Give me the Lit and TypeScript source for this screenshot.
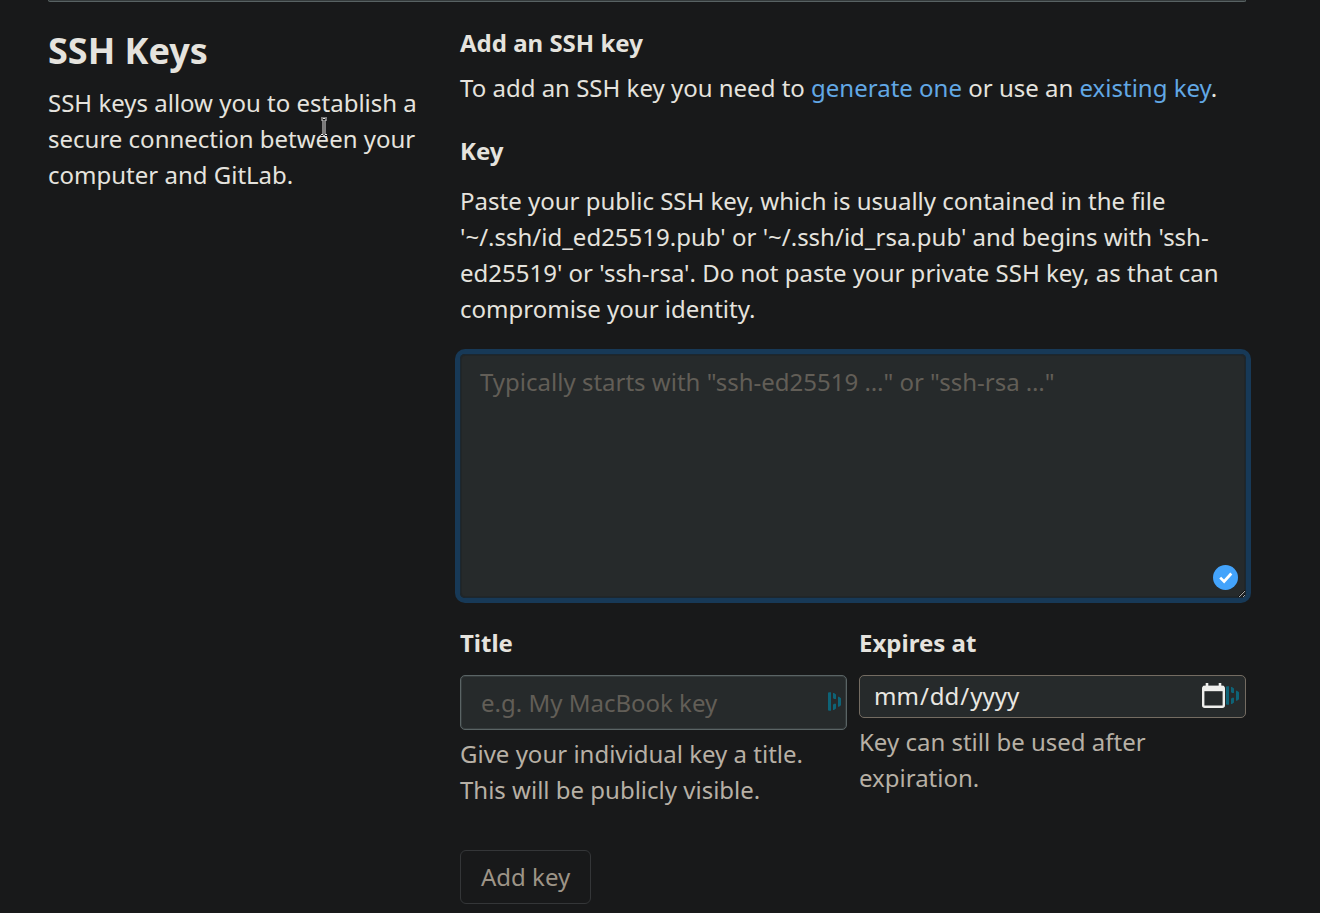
import { LitElement, html, css } from "lit";
import { customElement } from "lit/decorators.js";

@customElement("app-root")
export class AppRoot extends LitElement {
  static styles = css`
    :host {
      display: block;
      min-height: 100vh;
      box-sizing: border-box;
      background: #18191a;
      color: #e5e3de;
      font: 24px/36px "Noto Sans", sans-serif;
      color-scheme: dark;
    }
    * { box-sizing: border-box; }
    .page { padding: 0 74px 9px 48px; }
    .panel-end {
      height: 2px;
      border: 1px solid #586263;
      border-top: 0;
      border-radius: 0 0 4px 4px;
      background: #343a3b;
    }
    .section {
      display: grid;
      grid-template-columns: 1fr 2fr;
      column-gap: 19px;
      padding-top: 23px;
    }
    .intro { position: relative; }
    h1, h2, p { margin: 0; }
    h1 { font-size: 36px; line-height: 48px; margin-top: 2px; font-weight: 700; }
    .intro p { margin-top: 10px; }
    h2, label { display: block; font-size: 24px; line-height: 36px; font-weight: 700; }
    .lead { margin-top: 9px; }
    a { color: #62a8e5; text-decoration: none; }
    .key-label { margin-top: 27px; }
    .key-help { margin-top: 14px; }
    input, textarea, button { font: inherit; margin: 0; }
    .field { position: relative; display: flex; }
    .key-field { margin-top: 27px; }
    textarea {
      display: block;
      width: 100%;
      height: 244px;
      padding: 10px 20px;
      border: 0;
      border-radius: 5px;
      outline: 0;
      background: #262a2b;
      color: #e5e3de;
      box-shadow: inset 0 0 0 1px #1b2730, inset 0 0 0 2px #222627, 0 0 0 5px #173957;
      resize: vertical;
    }
    ::placeholder { color: #625e57; opacity: 1; }
    .check { position: absolute; right: 8px; bottom: 8px; width: 25px; height: 25px; }
    .row {
      display: grid;
      grid-template-columns: 1fr 1fr;
      column-gap: 12px;
      margin-top: 27px;
    }
    .row .field { margin-top: 14px; }
    input {
      width: 100%;
      min-width: 0;
      border-radius: 5px;
      background: #262a2b;
      color: #e9e7e2;
    }
    .title { height: 55px; padding: 0 20px; border: 1px solid #5a6465; box-shadow: inset 0 0 0 1px #343a3b; }
    .date { height: 43px; padding: 0 13px 2px; border: 1px solid #746c62; }
    .date::-webkit-calendar-picker-indicator { opacity: 0; }
    .mark { position: absolute; right: 5px; top: 17px; width: 14px; height: 19px; }
    .date-mark { top: 11px; right: 6px; }
    .calendar { position: absolute; right: 21px; top: 8px; width: 23px; height: 25px; pointer-events: none; }
    .hint { color: #b7b0a5; margin-top: 6px; }
    button {
      display: block;
      margin-top: 42px;
      height: 54px;
      padding: 0 20px;
      border: 1px solid #343638;
      border-radius: 6px;
      background: transparent;
      color: #9d9487;
    }
    .pointer { position: absolute; left: 272px; top: 92px; width: 8px; height: 20px; pointer-events: none; }
  `;

  private mark(cls: string) {
    return html`<svg class="mark ${cls}" viewBox="0 0 14 19" aria-hidden="true" fill="#0e6377">
      <path d="M0 .8 1 .3h2v18.400H1l-1-.5zM5 1h1l2 1.500V7H6L5 6zM5 12.800l1-1h2v4.700L6 18H5zM10 4.800h1l2 1.500v6.900l-2 1.500h-1z"/>
    </svg>`;
  }

  render() {
    return html`
      <main class="page">
        <div class="panel-end"></div>
        <section class="section">
          <div class="intro">
            <h1>SSH Keys</h1>
            <p>SSH keys allow you to establish a secure connection between your computer and GitLab.</p>
            <svg class="pointer" viewBox="0 0 8 20" aria-hidden="true" fill="none">
              <path d="M1 2h2l1 1 1-1h2M4 3v15M1 18.500h2l1-1 1 1h2" stroke="#e4e4e4" stroke-width="3"/>
              <path d="M1 2h2l1 1 1-1h2M4 3v15M1 18.500h2l1-1 1 1h2" stroke="#111" stroke-width="1"/>
            </svg>
          </div>
          <form>
            <h2>Add an SSH key</h2>
            <p class="lead">To add an SSH key you need to <a href="#generate">generate one</a> or use an <a href="#existing">existing key</a>.</p>
            <label class="key-label" for="key">Key</label>
            <p class="key-help" id="key-help">Paste your public SSH key, which is usually contained in the file '~/.ssh/id_ed25519.pub' or '~/.ssh/id_rsa.pub' and begins with 'ssh-ed25519' or 'ssh-rsa'. Do not paste your private SSH key, as that can compromise your identity.</p>
            <div class="field key-field">
              <textarea id="key" aria-describedby="key-help" placeholder='Typically starts with "ssh-ed25519 …" or "ssh-rsa …"'></textarea>
              <svg class="check" viewBox="0 0 25 25" aria-hidden="true">
                <circle cx="12.500" cy="12.500" r="12.500" fill="#43a3fb"/>
                <path d="m7.200 12.600 3.900 3.900 7.200-8" fill="none" stroke="#fff" stroke-width="2.700"/>
              </svg>
            </div>
            <div class="row">
              <div>
                <label for="title">Title</label>
                <div class="field">
                  <input class="title" id="title" type="text" placeholder="e.g. My MacBook key">
                  ${this.mark("")}
                </div>
                <p class="hint">Give your individual key a title. This will be publicly visible.</p>
              </div>
              <div>
                <label for="expires">Expires at</label>
                <div class="field">
                  <input class="date" id="expires" type="date">
                  <svg class="calendar" viewBox="0 0 23 25" aria-hidden="true">
                    <path d="M5 0v4M18 0v4" stroke="#efefed" stroke-width="2.600"/>
                    <rect x="1.200" y="4" width="20.600" height="19.800" rx="1.500" fill="none" stroke="#efefed" stroke-width="2.400"/>
                    <path d="M1 2.800h21v5.400H1z" fill="#efefed"/>
                  </svg>
                  ${this.mark("date-mark")}
                </div>
                <p class="hint">Key can still be used after expiration.</p>
              </div>
            </div>
            <button type="button">Add key</button>
          </form>
        </section>
      </main>
    `;
  }
}
